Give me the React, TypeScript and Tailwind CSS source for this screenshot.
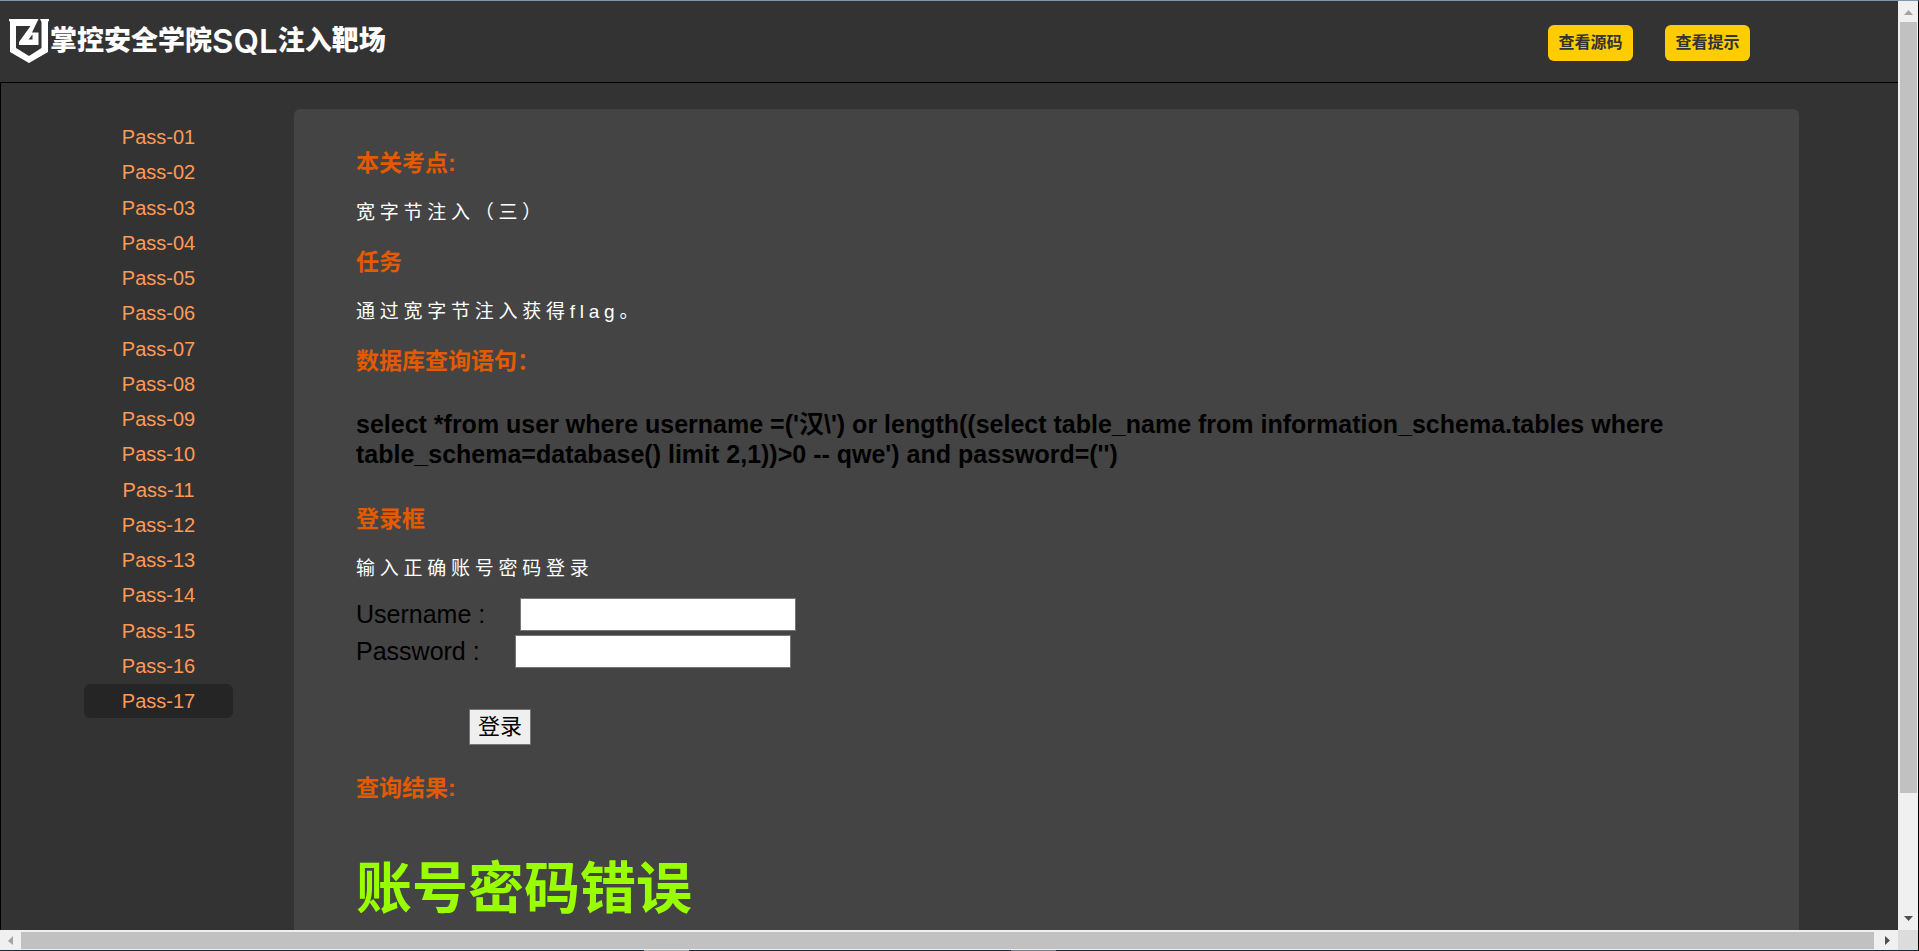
import React, { useState } from 'react';

const PASSES = Array.from({ length: 17 }, (_, i) => `Pass-${String(i + 1).padStart(2, '0')}`);

function Logo() {
  return (
    <svg className="h-[46px] w-[42px]" viewBox="0 0 42 46" fill="#fff" fillRule="evenodd">
      <path d="M1 1H30.5L24 14.5H30.5V27H11V24L22.5 8H8V30L21 38L33.5 30V4L32 1H41V2.5L40 4V34L21 45L2 34V4L1 2.5ZM20.5 21.5H24.5V16.5Z" />
    </svg>
  );
}

function Header() {
  return (
    <header className="flex h-[82px] shrink-0 items-start justify-between border-b border-black pl-2 pr-[148px]">
      <a href="#" className="flex items-center pt-[17px] text-white">
        <Logo />
        <h1 className="flex items-center text-[27px] leading-[40px] font-black">
          掌控安全学院
          <span className="font-['Inter','Liberation_Sans',sans-serif] text-[33px] font-semibold">SQL</span>
          注入靶场
        </h1>
      </a>
      <div className="flex gap-8 pt-6">
        <HeaderButton label="查看源码" />
        <HeaderButton label="查看提示" />
      </div>
    </header>
  );
}

function HeaderButton({ label }: { label: string }) {
  return (
    <button type="button" className="h-9 w-[85px] rounded-md bg-[#ffcc00] text-base font-bold text-[#333]">
      {label}
    </button>
  );
}

function SideNav() {
  const [current, setCurrent] = useState('Pass-17');

  return (
    <nav className="mr-[61px] ml-[83px] w-[149px] shrink-0 pt-[11px]">
      <ul className="flex h-[598px] flex-col justify-between">
        {PASSES.map((pass) => (
          <li key={pass}>
            <a
              href={`#${pass}`}
              onClick={() => setCurrent(pass)}
              className={`block rounded-md text-center text-xl leading-[34px] text-[#ff9955] ${
                current === pass ? 'bg-[#252525]' : ''
              }`}
            >
              {pass}
            </a>
          </li>
        ))}
      </ul>
    </nav>
  );
}

function SectionTitle({ children }: { children: React.ReactNode }) {
  return <h3 className="text-[23px] leading-[30px] font-bold text-[#e35b00]">{children}</h3>;
}

function Note({ children }: { children: React.ReactNode }) {
  return <p className="my-5 text-[19px] leading-[29px] tracking-[0.25em] text-white">{children}</p>;
}

function Field({ id, label, type }: { id: string; label: string; type: string }) {
  return (
    <div className="flex items-center gap-[35px]">
      <label htmlFor={id} className="text-[25px] leading-[33px]">
        {label}
      </label>
      <input id={id} type={type} className="h-[33px] w-[276px] border border-[#767676] bg-white px-1 text-xl" />
    </div>
  );
}

function VerticalScrollbar() {
  return (
    <div className="flex w-5 shrink-0 flex-col items-center bg-[#f0f0f0]">
      <svg className="h-[21px] w-5" viewBox="0 0 20 21" fill="#a3a3a3">
        <path d="M10.5 9L15 14H6Z" />
      </svg>
      <div className="w-[17px] flex-[771] bg-[#c1c1c1]" />
      <div className="flex-[116]" />
      <svg className="h-[21px] w-5" viewBox="0 0 20 21" fill="#505050">
        <path d="M6 7H15L10.5 12Z" />
      </svg>
    </div>
  );
}

function HorizontalScrollbar() {
  return (
    <div className="flex h-5 shrink-0 bg-[#f0f0f0]">
      <svg className="h-5 w-[21px]" viewBox="0 0 21 20" fill="#a3a3a3">
        <path d="M8 11L13 6V15Z" />
      </svg>
      <div className="my-auto h-[17px] flex-1 bg-[#c1c1c1]" />
      <svg className="h-5 w-6" viewBox="0 0 24 20" fill="#505050">
        <path d="M11 6V15L16 10.5Z" />
      </svg>
      <div className="w-5 bg-[#dcdcdc]" />
    </div>
  );
}

function TaskbarEdge() {
  return (
    <div className="flex h-px shrink-0 bg-[#1c2b3a]">
      <div className="flex-[644]" />
      <div className="w-[45px] bg-[#a9aeb4]" />
      <div className="flex-[323]" />
      <div className="w-[45px] bg-[#747f8c]" />
      <div className="flex-[862]" />
    </div>
  );
}

export default function App() {
  return (
    <div className="flex h-screen flex-col border-t border-t-[#7b9aab] border-r border-r-black bg-[#333] font-['Liberation_Sans','Noto_Sans_CJK_SC',sans-serif] text-black">
      <div className="flex min-h-0 flex-1">
        <div className="flex min-w-0 flex-1 flex-col">
          <Header />
          <div className="flex min-h-0 flex-1 overflow-hidden border-l border-black pt-[26px]">
            <SideNav />
            <main className="mr-[99px] flex-1 rounded-t-md bg-[#444] px-[62px] pt-[39px]">
              <SectionTitle>本关考点:</SectionTitle>
              <Note>宽字节注入（三）</Note>
              <SectionTitle>任务</SectionTitle>
              <Note>通过宽字节注入获得flag。</Note>
              <SectionTitle>数据库查询语句：</SectionTitle>
              <h2 className="mt-[33px] mb-[35px] text-[25px] leading-[30px] font-bold">
                select *from user where username =('汉\') or length((select table_name from
                information_schema.tables where table_schema=database() limit 2,1))&gt;0 -- qwe') and password=('')
              </h2>
              <SectionTitle>登录框</SectionTitle>
              <Note>输入正确账号密码登录</Note>
              <form className="-mt-[5px] flex flex-col gap-1" onSubmit={(e) => e.preventDefault()}>
                <Field id="username" label="Username :" type="text" />
                <Field id="password" label="Password :" type="password" />
                <button
                  type="submit"
                  className="mt-[37px] mb-7 ml-[113px] h-9 w-[62px] self-start border border-[#767676] bg-[#efefef] text-[22px] leading-[34px]"
                >
                  登录
                </button>
              </form>
              <SectionTitle>查询结果:</SectionTitle>
              <p className="mt-[50px] text-[56px] leading-[72px] font-bold text-[#99ff00]">账号密码错误</p>
            </main>
          </div>
        </div>
        <VerticalScrollbar />
      </div>
      <HorizontalScrollbar />
      <TaskbarEdge />
    </div>
  );
}
